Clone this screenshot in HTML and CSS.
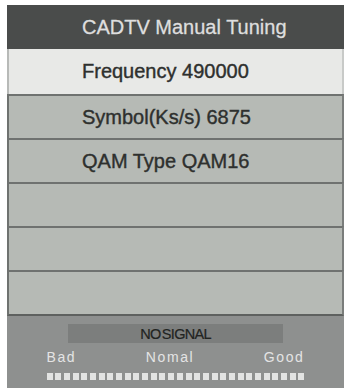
FILE: index.html
```html
<!DOCTYPE html>
<html>
<head>
<meta charset="utf-8">
<link rel="stylesheet" href="styles.css">
</head>
<body>
<div class="screen">
  <div class="header">CADTV Manual Tuning</div>
  <div class="row selected">Frequency 490000</div>
  <div class="row">Symbol(Ks/s) 6875</div>
  <div class="row">QAM Type QAM16</div>
  <div class="row"></div>
  <div class="row"></div>
  <div class="row last"></div>
  <div class="signal">
    <div class="bar">NO SIGNAL</div>
    <div class="labels"><span>Bad</span><span>Nomal</span><span>Good</span></div>
    <div class="dots">
      <i></i><i></i><i></i><i></i><i></i><i></i><i></i><i></i><i></i><i></i>
      <i></i><i></i><i></i><i></i><i></i><i></i><i></i><i></i><i></i><i></i>
      <i></i><i></i><i></i><i></i><i></i><i></i><i></i><i></i><i></i><i></i>
    </div>
  </div>
</div>
</body>
</html>
```
FILE: styles.css
```css
html, body {
  margin: 0;
  padding: 0;
  background: #ffffff;
}
body {
  font-family: "Liberation Sans", Arial, sans-serif;
}
.screen {
  margin: 5px 0 0 7px;
  width: 337px;
}
.header {
  height: 44px;
  background: #4a4c4b;
  color: #dedede;
  font-size: 20px;
  -webkit-text-stroke: 0.3px #dedede;
  display: flex;
  align-items: center;
  padding-left: 75px;
  box-sizing: border-box;
}
.row {
  height: 44px;
  box-sizing: border-box;
  background: #b6bab5;
  border-left: 2px solid #6f7270;
  border-right: 2px solid #7a7d7b;
  border-top: 2px solid #6f7270;
  color: #2e302e;
  font-size: 20px;
  -webkit-text-stroke: 0.4px #2e302e;
  display: flex;
  align-items: center;
  padding-left: 73px;
}
.row.selected {
  height: 45px;
  background: #e8e9e7;
  border-top: none;
  border-left-color: #b8bab8;
  border-right-color: #c8cac8;
}
.row.last {
  height: 46px;
  border-bottom: 2px solid #5e615f;
}
.signal {
  background: #8e908f;
  height: 72px;
  box-sizing: border-box;
  padding-top: 8px;
  display: flex;
  flex-direction: column;
  align-items: center;
}
.bar {
  width: 215px;
  height: 19px;
  background: #7c7e7d;
  color: #222422;
  font-size: 14.5px;
  letter-spacing: -0.7px;
  word-spacing: -2px;
  -webkit-text-stroke: 0.2px #222422;
  display: flex;
  align-items: center;
  justify-content: center;
}
.labels {
  width: 258px;
  display: flex;
  justify-content: space-between;
  margin-top: 7px;
  font-size: 14px;
  line-height: 15px;
  letter-spacing: 1.6px;
  color: #e4e4e4;
}
.dots {
  width: 258px;
  display: flex;
  justify-content: space-between;
  margin-top: 8px;
}
.dots i {
  display: block;
  width: 6px;
  height: 7px;
  background: #e2e3e2;
}
```
